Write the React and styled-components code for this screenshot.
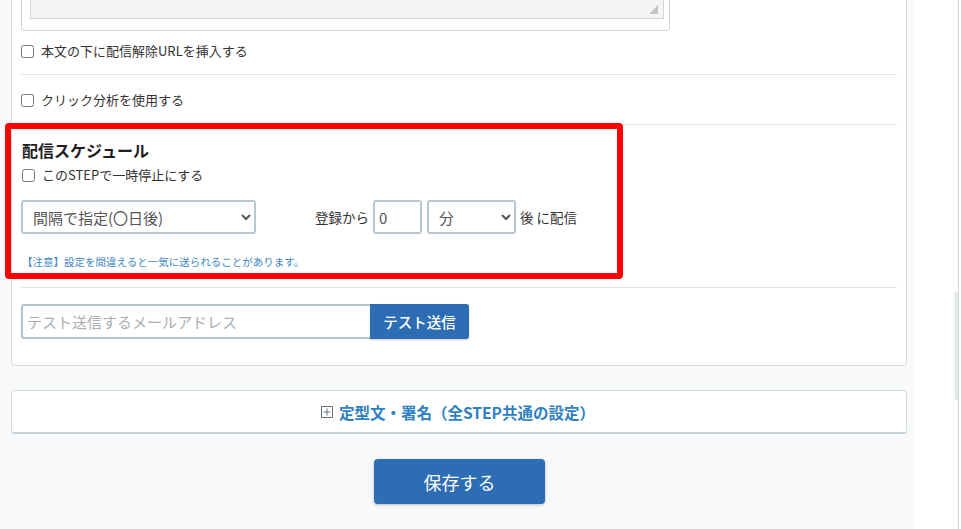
import React from "react";
import styled, { createGlobalStyle } from "styled-components";

const GlobalStyle = createGlobalStyle`
  html, body {
    margin: 0;
    padding: 0;
    background: #ffffff;
    font-family: "Noto Sans CJK JP", "Noto Sans", sans-serif;
    color: #333;
  }
  * {
    box-sizing: border-box;
  }
`;

const Page = styled.div`
  display: flex;
  width: 961px;
  height: 529px;
  overflow: hidden;
`;

const Main = styled.div`
  width: 914px;
  flex-shrink: 0;
  background: #f7f9fb;
  padding: 0 7px 0 11px;
`;

const SideStrip = styled.div`
  position: relative;
  width: 45px;
  flex-shrink: 0;
  background: #ffffff;
  border-right: 1px solid #c9d5d8;
`;

const SideShadow = styled.div`
  position: absolute;
  right: 0;
  top: 292px;
  width: 3px;
  height: 108px;
  background: #e4e7e8;
  box-shadow: 0 0 3px #e0e3e4;
`;

const Card = styled.div`
  background: #ffffff;
  border: 1px solid #d3dde0;
  border-radius: 4px;
  padding: 9px;
  margin-top: ${(p) => p.$top || 0}px;
`;

const TextareaBox = styled.div`
  width: 649px;
  border: 1px solid #ccd6da;
  border-radius: 3px;
  padding: 8px 5px 11px 8px;
`;

const FakeTextarea = styled.div`
  position: relative;
  height: 30px;
  background: #f5f5f5;
  border: 1px solid #cfd8dc;
`;

const ResizeGrip = styled.div`
  position: absolute;
  right: 5px;
  bottom: 4px;
  width: 0;
  height: 0;
  border-left: 9px solid transparent;
  border-bottom: 9px solid #c4c4c4;
`;

const CheckRow = styled.label`
  display: flex;
  align-items: center;
  height: ${(p) => 20 + p.$pt + p.$pb}px;
  padding: ${(p) => p.$pt}px 0 ${(p) => p.$pb}px;
  font-size: 13px;
  line-height: 20px;
  color: #333;
`;

const Check = styled.input.attrs({ type: "checkbox" })`
  width: 13px;
  height: 13px;
  margin: 1px 7px 0 0;
`;

const Divider = styled.div`
  height: 1px;
  background: #dde5e7;
`;

const Schedule = styled.div`
  position: relative;
  padding: 14px 0 18px 1px;
`;

const Highlight = styled.div`
  position: absolute;
  left: -16px;
  top: -2px;
  width: 618px;
  height: 156px;
  border: 6px solid #ff0000;
  border-radius: 4px;
  pointer-events: none;
`;

const Heading = styled.div`
  font-size: 16px;
  line-height: 22px;
  font-weight: 700;
  color: #1e1e1e;
`;

const TimingRow = styled.div`
  display: flex;
  align-items: center;
  margin-top: 15px;
  margin-left: -1px;
  font-size: 13.5px;
  color: #333;
`;

const Select = styled.select`
  width: ${(p) => p.$w}px;
  height: 34px;
  padding: 0 4px 0 6px;
  border: 2px solid #b9c8ce;
  border-radius: 3px;
  background: #ffffff;
  font-family: inherit;
  font-size: 15px;
  color: #555;
  margin: ${(p) => p.$m || "0"};
`;

const NumberInput = styled.input`
  width: 49px;
  height: 34px;
  padding: 0 4px;
  border: 2px solid #b9c8ce;
  border-radius: 3px;
  font-family: inherit;
  font-size: 15px;
  color: #555;
  margin: 0 5px 0 4px;
`;

const Spacer = styled.span`
  width: 59px;
`;

const Note = styled.div`
  margin-top: 21px;
  font-size: 10.5px;
  line-height: 14px;
  color: #3d89c6;
`;

const TestRow = styled.div`
  display: flex;
  padding: 16px 0 17px;
`;

const MailInput = styled.input`
  width: 349px;
  height: 35px;
  padding: 0 4px;
  border: 2px solid #b4c3ca;
  border-right: none;
  border-radius: 3px 0 0 3px;
  font-family: inherit;
  font-size: 15px;
  color: #555;
  outline: none;
  &::placeholder {
    color: #a9b0b4;
  }
`;

const TestButton = styled.button`
  width: 99px;
  height: 35px;
  border: none;
  border-radius: 0 3px 3px 0;
  background: #2d6db3;
  color: #ffffff;
  font-family: inherit;
  font-size: 14.5px;
  font-weight: 500;
  box-shadow: 0 1px 2px rgba(0, 0, 0, 0.2);
`;

const Collapse = styled.div`
  display: flex;
  align-items: center;
  justify-content: center;
  gap: 6px;
  height: 44px;
  margin-top: 24px;
  padding-right: 2px;
  background: #ffffff;
  border: 1px solid #d3dde0;
  border-bottom: 2px solid #c5d1d5;
  border-radius: 4px;
  font-size: 15.5px;
  font-weight: 700;
  color: #2f80c2;
`;

const PlusIcon = styled.svg`
  width: 12px;
  height: 12px;
  flex-shrink: 0;
  margin-top: 1px;
`;

const SaveWrap = styled.div`
  display: flex;
  justify-content: center;
  padding-top: 25px;
  padding-left: 1px;
`;

const SaveButton = styled.button`
  width: 171px;
  height: 45px;
  border: none;
  border-radius: 4px;
  background: #2d6db3;
  color: #ffffff;
  font-family: inherit;
  font-size: 18px;
  box-shadow: 0 1px 3px rgba(0, 0, 0, 0.25);
`;

export default function App() {
  return (
    <>
      <GlobalStyle />
      <Page>
        <Main>
          <Card $top={-30}>
            <TextareaBox>
              <FakeTextarea>
                <ResizeGrip />
              </FakeTextarea>
            </TextareaBox>
            <CheckRow $pt={10} $pb={13}>
              <Check />
              本文の下に配信解除URLを挿入する
            </CheckRow>
            <Divider />
            <CheckRow $pt={15} $pb={14}>
              <Check />
              クリック分析を使用する
            </CheckRow>
            <Divider />
            <Schedule>
              <Highlight />
              <Heading>配信スケジュール</Heading>
              <CheckRow $pt={4} $pb={0}>
                <Check />
                このSTEPで一時停止にする
              </CheckRow>
              <TimingRow>
                <Select $w={235} defaultValue="interval">
                  <option value="interval">間隔で指定(〇日後)</option>
                  <option value="date">日時で指定</option>
                </Select>
                <Spacer />
                登録から
                <NumberInput defaultValue="0" />
                <Select $w={89} $m="0 4px 0 0" defaultValue="min">
                  <option value="min">分</option>
                  <option value="hour">時間</option>
                  <option value="day">日</option>
                </Select>
                後 に配信
              </TimingRow>
              <Note>【注意】設定を間違えると一気に送られることがあります。</Note>
            </Schedule>
            <Divider />
            <TestRow>
              <MailInput placeholder="テスト送信するメールアドレス" />
              <TestButton>テスト送信</TestButton>
            </TestRow>
          </Card>
          <Collapse>
            <PlusIcon viewBox="0 0 12 12">
              <rect x="0.5" y="0.5" width="11" height="11" fill="none" stroke="#6b747a" strokeWidth="1" />
              <path d="M6 2.5v7M2.5 6h7" stroke="#6b747a" strokeWidth="1" />
            </PlusIcon>
            定型文・署名（全STEP共通の設定）
          </Collapse>
          <SaveWrap>
            <SaveButton>保存する</SaveButton>
          </SaveWrap>
        </Main>
        <SideStrip>
          <SideShadow />
        </SideStrip>
      </Page>
    </>
  );
}
